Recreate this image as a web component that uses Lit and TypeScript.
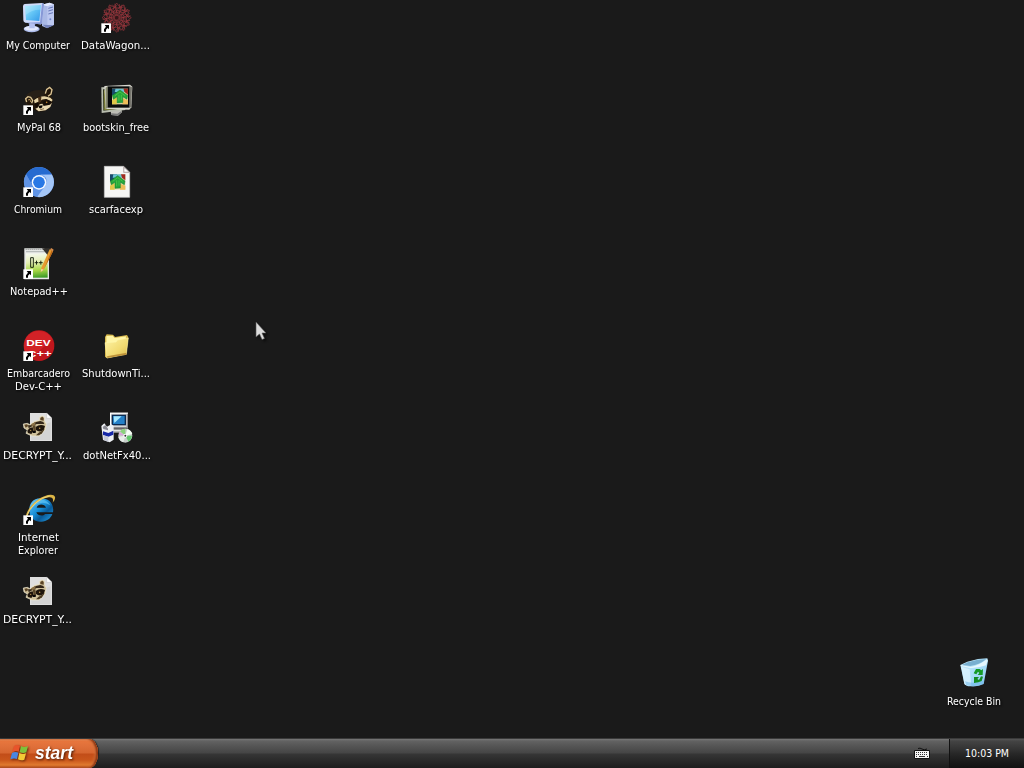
import { LitElement, html, svg, css, nothing } from "lit";
import { customElement, property } from "lit/decorators.js";

type Line = [text: string, width: number, shift?: number];
interface Item { icon: string; col: number; row: number; link?: boolean; lines: Line[] }

const ITEMS: Item[] = [
  { icon: "computer", col: 1, row: 1, lines: [["My Computer", 64]] },
  { icon: "wagon", col: 2, row: 1, link: true, lines: [["DataWagon...", 69, -1]] },
  { icon: "mypal", col: 1, row: 2, link: true, lines: [["MyPal 68", 44, 1]] },
  { icon: "bootskin", col: 2, row: 2, lines: [["bootskin_free", 66]] },
  { icon: "chromium", col: 1, row: 3, link: true, lines: [["Chromium", 48]] },
  { icon: "skinfile", col: 2, row: 3, lines: [["scarfacexp", 54]] },
  { icon: "notepad", col: 1, row: 4, link: true, lines: [["Notepad++", 58, 1]] },
  { icon: "devcpp", col: 1, row: 5, link: true, lines: [["Embarcadero", 63], ["Dev-C++", 47]] },
  { icon: "folder", col: 2, row: 5, lines: [["ShutdownTi...", 68]] },
  { icon: "racfile", col: 1, row: 6, lines: [["DECRYPT_Y...", 69, -1]] },
  { icon: "installer", col: 2, row: 6, lines: [["dotNetFx40...", 68, 1]] },
  { icon: "ie", col: 1, row: 7, link: true, lines: [["Internet", 41], ["Explorer", 40]] },
  { icon: "racfile", col: 1, row: 8, lines: [["DECRYPT_Y...", 69, -1]] },
];

const tree = svg`
  <path d="M0 0H46V46H0Z" fill="#e9dfae"/>
  <path d="M0 0H22L8 20H0Z" fill="#174a6b"/><path d="M10 0H34L38 10H8Z" fill="#6cc4d4"/><path d="M33 0H46V18L36 10Z" fill="#a02a20"/>
  <path d="M0 46V34L14 26V46Z" fill="#e0c848"/><path d="M30 46V28L46 34V46Z" fill="#eebd58"/>
  <path d="M23 4L45 20L43 31L31 24V41L15 42V24L4 31L1 20Z" fill="#25a53b" stroke="#0b7a28" stroke-width="1.5"/>
  <path d="M8 21L23 10L38 21M20 18V36M27 18V34" fill="none" stroke="#4ac848" stroke-width="2.5"/>`;

const raccoon = svg`
  <path d="M70 60L82 58L90 62L104 52L118 49L118 40L126 35L134 39L134 51L139 60L136 76L128 86L118 96L96 96L78 88L82 78L72 72Z" fill="#cfc09a" stroke="#efe8d2" stroke-width="2"/>
  <path d="M73 62L81 61L85 66L77 71ZM121 48V42L127 38L131 42V50Z" fill="#5b4528"/>
  <path d="M84 64L92 64L105 55L121 51L130 54L133 60L110 60L92 69L86 73Z" fill="#33271a"/>
  <path d="M94 60L108 54L103 65L95 67Z" fill="#8b7145"/>
  <path d="M107 69Q120 59 135 66L131 79Q117 86 108 78Z" fill="#1d140b"/>
  <path d="M82 80L89 72L98 70L101 81L94 90L84 87Z" fill="#1d140b"/>
  <path d="M98 66L106 63L108 80L101 82Z" fill="#584528"/>
  <path d="M116 86L134 76L126 88L117 94L108 94Z" fill="#4a3a22"/>
  <path d="M98 81L108 80L107 87L99 87Z" fill="#080605"/>
  <circle cx="119" cy="73" r="2.3" fill="#c29a52"/><circle cx="92" cy="79" r="2" fill="#c29a52"/>`;

const arrow = (x: number, y: number) => svg`
  <rect x=${x} y=${y} width="29" height="29" fill="#fff"/>
  <path transform="translate(${x} ${y})" d="M10 5H23V18L19 14L14 19V25H8V18L14 10Z" fill="#000"/>`;

const petals = Array.from({ length: 12 }, (_, i) => i * 30);

/* Artwork is drawn at three units per pixel, each icon with its own origin. */
const ART: Record<string, { box: string; art: unknown }> = {
  computer: { box: "66 6 96 96", art: svg`
    <path d="M126 14L148 8L162 13V74L140 84L126 78Z" fill="#aab9e6"/>
    <path d="M126 14L148 8L162 13L142 19Z" fill="#e4eaff"/><path d="M142 19L162 13V74L142 83Z" fill="#bcc8f0"/>
    <path d="M145 25L159 21M145 33L159 29M145 42L159 38" stroke="#6475b8" stroke-width="3"/><circle cx="151" cy="58" r="3" fill="#7186cb"/>
    <path d="M128 74L162 76L141 85Z" fill="#7584bd"/>
    <path d="M86 70L106 72L104 82H88Z" fill="#8696d0"/>
    <ellipse cx="95" cy="87" rx="24" ry="10" fill="#aebdec"/><ellipse cx="94" cy="85" rx="21" ry="7" fill="#e4eafd"/>
    <path d="M89 66H104V85H88Z" fill="#b4c1ee"/>
    <path d="M74 12L126 9Q132 9 132 14L126 68Q125 74 119 73L76 68Q70 67 70 61L69 19Q69 13 74 12Z" fill="#cfdbfa"/>
    <path d="M126 10Q132 9 132 14L126 68Q125 74 119 73L76 68L120 67Z" fill="#8798d6"/>
    <path d="M75 18L123 15L118 63L78 60Z" fill="url(#screen)"/><path d="M75 18L123 15L122 29Q96 28 77 45Z" fill="#c9f3ff" opacity=".3"/>` },
  wagon: { box: "300 6 96 96", art: svg`
    <g fill="none" stroke="#a3383f" stroke-width="1.8">
      ${petals.map((a) => svg`<path transform="rotate(${a} 350 53)" d="M350 53Q328 33 350 9Q372 30 350 53M337 14Q346 30 371 21M342 34L362 30L366 14"/>`)}
      <circle cx="350" cy="53" r="16"/>
    </g><circle cx="350" cy="53" r="6" fill="#351719"/>` },
  mypal: { box: "66 24 96 96", art: svg`
    <ellipse cx="116" cy="72" rx="42" ry="30" fill="#4a3010" opacity=".3"/>
    <path d="M77 68L84 62L93 63L99 71L114 62L132 59L136 50L138 40L149 32L157 39L157 51L152 61L158 70L157 80L150 94L134 106L113 107L100 98L83 84Z" fill="#22160a"/>
    <path d="M80 78L77 68L84 62L92 64L98 73L95 82M136 53L140 40L149 34L156 41L153 54L144 61" fill="none" stroke="#dcc594" stroke-width="4"/>
    <path d="M84 72L90 70L92 78" fill="none" stroke="#a98a55" stroke-width="3"/>
    <path d="M102 73Q115 62 134 61L151 65L158 72L154 77L140 69Q128 68 119 76L104 82Z" fill="#e5d2a5"/>
    <path d="M114 63L124 62L123 77L116 82Z" fill="#4a3118"/>
    <path d="M128 78Q143 68 154 77L149 86L134 88Z" fill="#150c06"/>
    <path d="M104 84L114 80L116 89L108 94Z" fill="#150c06"/>
    <path d="M119 85L127 83L131 90L150 86L156 80L151 93L137 103L116 106L106 98L113 95Z" fill="#ead9b2"/>
    <path d="M115 89L128 88L126 95L118 97Z" fill="#080504"/><path d="M122 97V101L132 98" fill="none" stroke="#503719" stroke-width="2"/>
    <circle cx="140" cy="79" r="2.5" fill="#c58733"/>` },
  bootskin: { box: "300 24 96 96", art: svg`
    <path d="M331 100L364 97L366 109L354 119L334 117Z" fill="#bdbdb6"/><path d="M334 112L352 113L364 105V110L352 119L334 117Z" fill="#777"/>
    <path d="M304 34L376 31V102L305 111Z" fill="#b9bdaf"/><path d="M309 40H370V97L310 104Z" fill="#30341c"/>
    <path d="M312 43H340V100L313 102Z" fill="#8c913e"/>
    <path d="M313 30L390 26L397 32L394 94L388 101L317 99Z" fill="#d8d7ce"/><path d="M317 35L323 31V95L317 99Z" fill="#86886c"/>
    <path d="M323 31H389V95H323Z" fill="#090b0b"/><path d="M389 31L396 34L393 94L389 96Z" fill="#77766e"/>
    <g transform="translate(336 38) scale(1.04 1.02)">${tree}</g>` },
  chromium: { box: "66 18 96 96", art: svg`
    <circle cx="117" cy="66" r="45" fill="#6495e7"/>
    <path d="M78 43A45 45 0 0 1 155 43L117 44L98 77Z" fill="#276bd0"/>
    <path d="M155 43A45 45 0 0 1 111 111L136 77Q146 58 132 48L122 44H156Z" fill="#a4c6f7"/>
    <path d="M78 43L98 77Q108 91 124 87L111 111A45 45 0 0 1 78 43Z" fill="#6094e5"/>
    <circle cx="117" cy="67" r="22" fill="#f3f8ff"/><circle cx="117" cy="67" r="17.5" fill="#2878e5"/>` },
  skinfile: { box: "300 18 96 96", art: svg`
    <path d="M313 19H371L389 37V112H313Z" fill="#f6f6f4" stroke="#c9c9c9" stroke-width="2"/>
    <path d="M370 18V38H390Z" fill="#a99d9d"/><path d="M373 24V35H385Z" fill="#fff"/><g transform="translate(330 43)">${tree}</g>` },
  notepad: { box: "66 24 96 96", art: svg`
    <path d="M73 25H132L147 40V118H73Z" fill="#e6e8e6"/><path d="M78 40H143V113H78Z" fill="url(#leaf)"/>
    <path d="M78 35H137" stroke="#b0b5b3" stroke-width="3"/><path d="M77 28h55" stroke="#7b7e7b" stroke-width="3" stroke-dasharray="3 3"/>
    <path d="M126 25H149L155 36L144 47Z" fill="#33302d"/>
    <path d="M92 53H100V82H92ZM104 68H115M109.5 62V74M117 68H128M122.5 62V74" fill="none" stroke="#111c0a" stroke-width="2.8"/>
    <path d="M149 28L159 34L132 88L122 96L124 83Z" fill="#e69b2f"/><path d="M155 31L159 34L132 88Z" fill="#ba6515"/><path d="M150 28L154 24L161 29L158 35Z" fill="#d28a4b"/><path d="M122 96L124 86L131 89Z" fill="#f0d3a1"/>` },
  devcpp: { box: "66 24 96 96", art: svg`
    <circle cx="117" cy="71" r="46" fill="#c0161c"/><path d="M80 45A46 46 0 0 1 157 51L90 111Q60 85 80 45Z" fill="#dc2a2e" opacity=".65"/>
    <g class="dev"><text x="79" y="71" textLength="73" lengthAdjust="spacingAndGlyphs">DEV</text><text x="81" y="105" textLength="74" lengthAdjust="spacingAndGlyphs">C++</text></g>` },
  folder: { box: "300 24 96 96", art: svg`
    <path d="M315 45L320 37L339 38L345 45L381 39L385 46L379 97L321 109L315 104Z" fill="#d7b84c"/>
    <path d="M319 42L338 41L344 48L378 43L376 61L319 70Z" fill="#fff5a5"/>
    <path d="M315 62L348 60L352 54L385 48L379 97L321 108Z" fill="url(#folder)" stroke="#fff8b0" stroke-width="1.5"/>
    <path d="M322 108L379 98L380 92L321 103Z" fill="#bd9139"/>` },
  racfile: { box: "66 24 96 96", art: svg`
    <path d="M90 27H140L156 43V111H90Z" fill="#dfdfdf"/><path d="M94 76L152 55V108H94Z" fill="#cacaca" opacity=".5"/><path d="M140 27V43H156Z" fill="#fff" stroke="#aaa"/>
    ${raccoon}` },
  installer: { box: "300 24 96 96", art: svg`
    <path d="M330 26H384V73H330Z" fill="#d7d7d7"/><path d="M330 26H384V29H333V73H330Z" fill="#fff"/><path d="M384 29V73H333V69H380V29Z" fill="#8a8a90"/>
    <path d="M335 32H378V64H335Z" fill="#0c2a50"/><path d="M339 36H374V60H339Z" fill="#2580c8"/><path d="M341 37H365L343 57Z" fill="#a7e9ff"/>
    <path d="M331 76H382V86H331Z" fill="#b9b9b9"/><path d="M334 79H365" stroke="#eee" stroke-width="3"/>
    <path d="M304 66L313 58L321 68L334 61L341 66V107L329 115L309 108Z" fill="#eef0f4"/>
    <path d="M309 82L325 87L340 80V92L325 98L309 93Z" fill="#1728a8"/>
    <path d="M308 69L316 63L324 74V79L310 75Z" fill="#8a8a94"/><path d="M325 98V114L311 108V94Z" fill="#c6cad8"/>
    <circle cx="376" cy="95" r="21" fill="#c7cfca"/><path d="M376 95L360 82Q368 73 376 74Z" fill="#8bd27c"/><path d="M376 95L382 75Q394 79 397 90Z" fill="#f5fff4"/><path d="M376 95L396 95Q395 107 386 113Z" fill="#63c96c"/><path d="M376 95L370 115Q357 111 355 98Z" fill="#e8eee9"/><path d="M376 95L356 94L359 84Z" fill="#d8a9d8"/><circle cx="376" cy="95" r="6" fill="#fff"/><circle cx="376" cy="95" r="3" fill="#333"/>` },
  ie: { box: "66 24 96 96", art: svg`
    <path d="M121 37C98 37 87 55 88 74C89 96 105 108 124 107C140 106 152 98 157 84H135C130 91 113 91 109 79H159C163 51 145 37 121 37ZM110 65C113 52 134 52 138 65Z" fill="url(#blue)" fill-rule="evenodd"/>
    <path d="M94 54Q104 40 122 41Q141 40 151 58Q130 44 110 55Q97 62 92 73Z" fill="#67c8f4" opacity=".65"/>
    <path d="M77 104C73 86 89 59 112 42C133 27 161 21 165 33Q167 40 158 50Q163 33 147 34C128 36 108 50 95 66C83 82 79 98 83 108Q79 110 77 104Z" fill="#dcb545"/>
    <path d="M79 93Q86 70 107 51Q129 32 149 30" fill="none" stroke="#f8e596" stroke-width="2"/>` },
  recycle: { box: "84 24 96 96", art: svg`
    <path d="M91 45L112 35L144 27L172 25L174 32L161 102Q145 111 121 109Q106 108 103 101Z" fill="url(#bin)"/>
    <path d="M91 45L121 51Q147 47 171 27L173 32L168 46Q144 55 120 54L93 47Z" fill="#f4fcff" opacity=".8"/>
    <path d="M95 45L113 37L143 29L168 28Q150 43 121 48Z" fill="#78afd0"/>
    <path d="M94 51L119 58L124 107Q105 107 103 101Z" fill="#dff4ff" opacity=".75"/><path d="M105 94Q129 104 162 91L160 102Q139 112 109 106Z" fill="#65b2e8" opacity=".5"/>
    <path d="M131 70L138 57H149L154 61L159 57L158 75H143L148 69L144 65L139 73Z" fill="#159b27"/>
    <path d="M159 80L155 93L145 97L132 99V81H147L142 87L147 90L153 79Z" fill="#138c22"/>` },
};

const defs = svg`<defs>
  <linearGradient id="screen" x1="0" y1="0" x2="1" y2="1"><stop stop-color="#a8ebff"/><stop offset=".5" stop-color="#61c3f5"/><stop offset="1" stop-color="#3298e8"/></linearGradient>
  <linearGradient id="leaf" x1=".5" y1="0" x2=".6" y2="1"><stop stop-color="#f4f8ed"/><stop offset=".35" stop-color="#e4efb3"/><stop offset=".7" stop-color="#a6d744"/><stop offset="1" stop-color="#3d9c27"/></linearGradient>
  <linearGradient id="folder" x1="0" y1="0" x2="1" y2="1"><stop stop-color="#fff4a6"/><stop offset=".6" stop-color="#f1da70"/><stop offset="1" stop-color="#d9b84d"/></linearGradient>
  <linearGradient id="blue" x1="0" y1="0" x2="1" y2="1"><stop stop-color="#70caff"/><stop offset=".45" stop-color="#168dd6"/><stop offset=".65" stop-color="#095997"/><stop offset="1" stop-color="#28a5ea"/></linearGradient>
  <linearGradient id="bin" x1="0" y1="0" x2="1" y2="1"><stop stop-color="#d7f3ff"/><stop offset=".55" stop-color="#a6dcf8"/><stop offset="1" stop-color="#8fc8f1"/></linearGradient>
</defs>`;

@customElement("fit-text")
class FitText extends LitElement {
  @property() text = "";
  @property({ type: Number }) width = 40;
  static styles = css`
    :host { display: block; height: 13px; }
    svg { display: block; overflow: visible; }
    text { font: 11px "DejaVu Sans Condensed", "DejaVu Sans", sans-serif; font-stretch: condensed; fill: #fff; }
  `;
  render() {
    return html`<svg width=${this.width} height="13"><text x="0" y="10" textLength=${this.width} lengthAdjust="spacingAndGlyphs">${this.text}</text></svg>`;
  }
}

@customElement("desktop-icon")
class DesktopIcon extends LitElement {
  @property({ attribute: false }) icon = "";
  @property({ attribute: false }) link = false;
  @property({ attribute: false }) lines: Line[] = [];
  static styles = css`
    :host { display: flex; flex-direction: column; align-items: center; gap: 5px; padding-top: 2px; box-sizing: border-box; }
    .picture { width: 32px; height: 32px; display: block; overflow: visible; }
    .dev text { font: 700 29px "Liberation Sans", Arial, sans-serif; fill: #fff; }
    .label { display: flex; flex-direction: column; align-items: center; filter: drop-shadow(1px 1px 1px #000); }
    .left { margin-right: 2px; }
    .right { margin-left: 2px; }
  `;
  render() {
    const { box, art } = ART[this.icon];
    const [x, y] = box.split(" ").map(Number);
    return html`
      <svg class="picture" viewBox=${box}>${defs}${art}${this.link ? arrow(x + 4, y + 64) : nothing}</svg>
      <div class="label">${this.lines.map(([t, w, s = 0]) => html`<fit-text class=${s < 0 ? "left" : s > 0 ? "right" : ""} .text=${t} .width=${w}></fit-text>`)}</div>`;
  }
}

@customElement("task-bar")
class TaskBar extends LitElement {
  static styles = css`
    :host { display: flex; height: 30px; box-sizing: border-box; border-top: 1px solid #3a3a3a;
      background: linear-gradient(#777 0, #626262 2px, #555 7px, #454545 14px, #363636 15px, #292929 22px, #1d1d1d 29px); }
    .start { width: 98px; height: 29px; box-sizing: border-box; display: flex; align-items: center; padding-left: 10px; gap: 5px;
      border-radius: 0 9px 9px 0 / 0 14px 14px 0;
      background: linear-gradient(#f6a878 0, #e8763d 2px, #e0703a 7px, #d66630 14px, #c24d18 15px, #c9561b 21px, #e07a2f 26px, #a94716 29px);
      box-shadow: inset -2px 0 2px #8c3510, inset -3px 0 3px #d9763f, 1px 0 1px #222; }
    .flag { width: 20px; height: 20px; flex: none; margin-bottom: 2px; filter: drop-shadow(1px 1px 1px #6a270b); }
    .word { width: 42px; height: 24px; margin-bottom: 2px; overflow: visible; filter: drop-shadow(1px 1px 1px #4e1b05); }
    .word text { font: italic 700 18px "Liberation Sans", Arial, sans-serif; fill: #fff; }
    .space { flex: 1; }
    .keys { width: 16px; height: 14px; margin: 7px 19px 0 0; }
    .tray { width: 75px; box-sizing: border-box; border-left: 1px solid #111; padding: 8px 0 0 15px;
      background: linear-gradient(#555 0, #444 2px, #333 10px, #272727 15px, #1b1b1b 22px, #111 29px); }
  `;
  render() {
    return html`
      <div class="start">
        <svg class="flag" viewBox="30 34 60 60">
          <path d="M42 43Q51 37 60 42L56 60Q47 56 37 61Z" fill="#e8542b"/><path d="M63 43Q72 49 84 43L79 62Q69 66 59 61Z" fill="#7fc23a"/>
          <path d="M36 64Q46 59 55 63L51 82Q41 78 31 83Z" fill="#4a86e0"/><path d="M58 64Q68 69 78 65L73 84Q64 88 54 83Z" fill="#f4cb36"/>
        </svg>
        <svg class="word"><text x="0" y="18" textLength="38" lengthAdjust="spacingAndGlyphs">start</text></svg>
      </div>
      <div class="space"></div>
      <svg class="keys" viewBox="0 0 16 14">
        <path d="M4 2.5Q6 1.5 8 3T13 3" fill="none" stroke="#111"/><path d="M.5 4.5H15.5V12.5H.5Z" fill="#f4f4f4" stroke="#111"/>
        <path d="M2 6.5H14M2 8.5H14" stroke="#333" stroke-dasharray="1 1"/><path d="M2 10.5H3M5 10.5H11M13 10.5H14" stroke="#333"/>
      </svg>
      <div class="tray"><fit-text text="10:03 PM" width="44"></fit-text></div>`;
  }
}

@customElement("app-root")
class AppRoot extends LitElement {
  static styles = css`
    :host { display: flex; flex-direction: column; width: 1024px; height: 768px; background: #1a1a1a; overflow: hidden; position: relative; cursor: default; }
    .desktop { flex: 1; min-height: 0; display: flex; justify-content: space-between; }
    .grid { display: grid; grid-template-columns: repeat(2, 78px); grid-template-rows: repeat(8, 82px); margin-left: -1px; }
    .bin { align-self: flex-end; width: 100px; height: 82px; }
    .pointer { position: absolute; left: 255px; top: 321px; width: 14px; height: 22px; filter: drop-shadow(2px 2px 1px #0008); }
  `;
  render() {
    return html`
      <div class="desktop">
        <div class="grid">${ITEMS.map((i) => html`<desktop-icon style="grid-area:${i.row}/${i.col}" .icon=${i.icon} .link=${!!i.link} .lines=${i.lines}></desktop-icon>`)}</div>
        <desktop-icon class="bin" .icon=${"recycle"} .lines=${[["Recycle Bin", 54]]}></desktop-icon>
      </div>
      <task-bar></task-bar>
      <svg class="pointer" viewBox="0 0 14 22"><path d="M1 1V16L4.5 13L7 18.5L9.5 17.5L7 12H11Z" fill="#dcdcdc" stroke="#555" stroke-width=".6"/></svg>`;
  }
}
